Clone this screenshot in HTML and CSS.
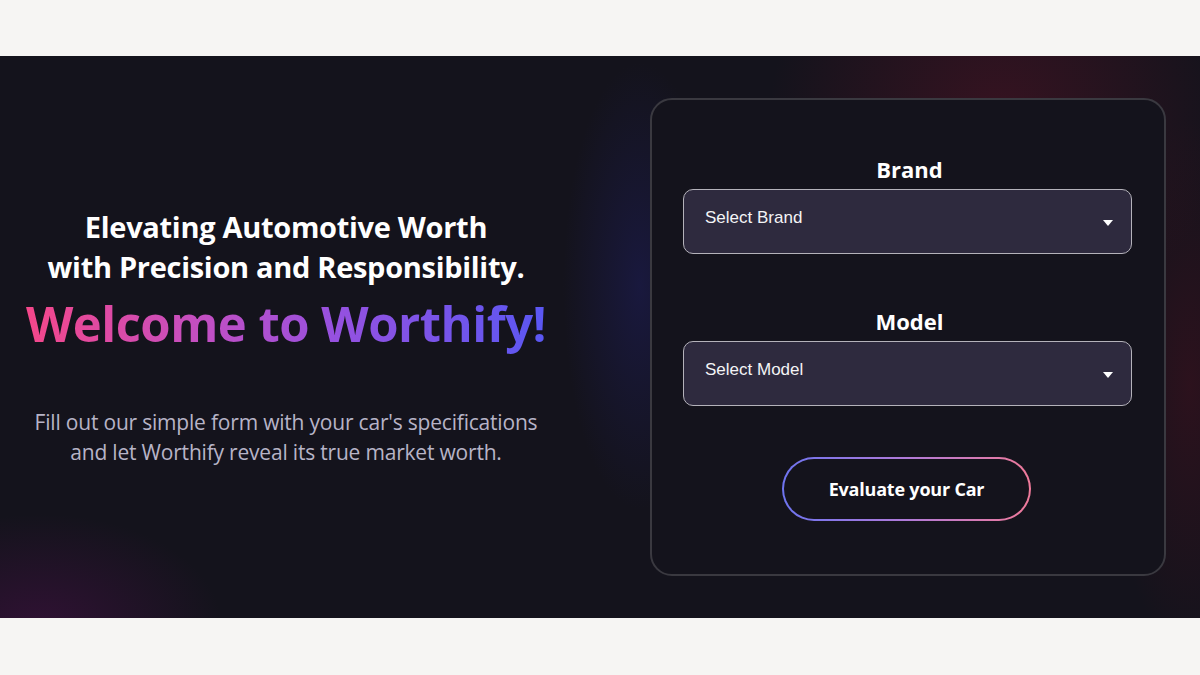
FILE: index.html
```html
<!DOCTYPE html>
<html lang="en">
<head>
<meta charset="utf-8">
<title>Worthify</title>
<link rel="stylesheet" href="styles.css">
</head>
<body>
<div class="topbar"></div>
<section class="hero">
  <div class="intro">
    <h2 class="tagline">Elevating Automotive Worth<br>with Precision and Responsibility.</h2>
    <h1 class="welcome">Welcome to Worthify!</h1>
    <p class="lead">Fill out our simple form with your car's specifications<br>and let Worthify reveal its true market worth.</p>
  </div>
  <div class="side">
    <form class="card">
      <div class="field">
        <label class="label">Brand</label>
        <div class="select"><span>Select Brand</span><svg class="caret" width="10" height="6" viewBox="0 0 10 6"><path d="M0 0H10L5 6Z" fill="#fff"/></svg></div>
      </div>
      <div class="field">
        <label class="label">Model</label>
        <div class="select"><span>Select Model</span><svg class="caret" width="10" height="6" viewBox="0 0 10 6"><path d="M0 0H10L5 6Z" fill="#fff"/></svg></div>
      </div>
      <div class="actions">
        <button type="button" class="btn">Evaluate your Car</button>
      </div>
    </form>
  </div>
</section>
<div class="bottombar"></div>
</body>
</html>
```

FILE: styles.css
```css
* { box-sizing: border-box; }
html, body { margin: 0; padding: 0; }
body {
  width: 1200px;
  height: 675px;
  background: #f6f5f3;
  font-family: "Open Sans", "Noto Sans", sans-serif;
  overflow: hidden;
}
.topbar { height: 56px; background: #f6f5f3; }
.bottombar { height: 58px; background: #f6f5f3; }
.hero {
  height: 562px;
  display: flex;
  background:
    radial-gradient(ellipse 330px 300px at 1000px 60px, rgba(110, 18, 40, 0.38), rgba(110, 18, 40, 0) 70%),
    radial-gradient(ellipse 110px 320px at 640px 230px, rgba(30, 30, 95, 0.5), rgba(30, 30, 95, 0) 70%),
    radial-gradient(ellipse 120px 380px at 1190px 330px, rgba(80, 15, 30, 0.4), rgba(80, 15, 30, 0) 70%),
    radial-gradient(ellipse 260px 160px at 40px 570px, rgba(70, 16, 70, 0.55), rgba(70, 16, 70, 0) 70%),
    #14131c;
}
.intro {
  width: 572px;
  display: flex;
  flex-direction: column;
  align-items: center;
  text-align: center;
  padding-top: 151px;
}
.tagline {
  margin: 0;
  color: #ffffff;
  font-size: 29px;
  line-height: 40px;
  font-weight: 700;
  letter-spacing: -0.3px;
}
.welcome {
  margin: 4px 0 0;
  font-size: 49px;
  line-height: 64px;
  font-weight: 700;
  letter-spacing: -0.5px;
  background: linear-gradient(90deg, #f5478a 0%, #c14fc4 35%, #9551e0 60%, #5a57f3 100%);
  -webkit-background-clip: text;
  background-clip: text;
  color: transparent;
}
.lead {
  margin: 52px 0 0;
  color: #b7b4c7;
  font-size: 21px;
  line-height: 30px;
  letter-spacing: -0.2px;
}
.side {
  flex: 1;
  padding: 42px 0 0 78px;
}
.card {
  width: 516px;
  height: 478px;
  margin: 0;
  border: 2px solid #3a3940;
  border-radius: 22px;
  background: #14131c;
  padding: 54px 32px 0 35px;
  display: flex;
  flex-direction: column;
  align-items: center;
}
.field {
  width: 100%;
  display: flex;
  flex-direction: column;
  align-items: center;
  margin-bottom: 52px;
}
.field + .field { margin-bottom: 51px; }
.label {
  color: #ffffff;
  font-size: 22px;
  line-height: 30px;
  font-weight: 700;
  margin-bottom: 5px;
}
.select {
  width: 449px;
  height: 65px;
  margin-left: -4px;
  border: 1.5px solid #b4b2ba;
  border-radius: 10px;
  background: #2e2a3e;
  display: flex;
  align-items: center;
  justify-content: space-between;
  padding: 0 18px 0 21px;
  color: #f4f4f6;
  font-family: "Liberation Sans", Arial, sans-serif;
  font-size: 17px;
}
.select span { margin-top: -8px; }
.caret { margin-top: 2px; }
.actions { display: flex; justify-content: center; margin-left: -6px; }
.btn {
  width: 249px;
  height: 64px;
  border-radius: 32px;
  border: 2px solid transparent;
  background:
    linear-gradient(#14131c, #14131c) padding-box,
    linear-gradient(90deg, #6e74f0 0%, #b07ad8 50%, #f07a9a 100%) border-box;
  color: #ffffff;
  font-family: "Open Sans", "Noto Sans", sans-serif;
  font-size: 18px;
  font-weight: 700;
  letter-spacing: -0.2px;
  cursor: pointer;
}
```
